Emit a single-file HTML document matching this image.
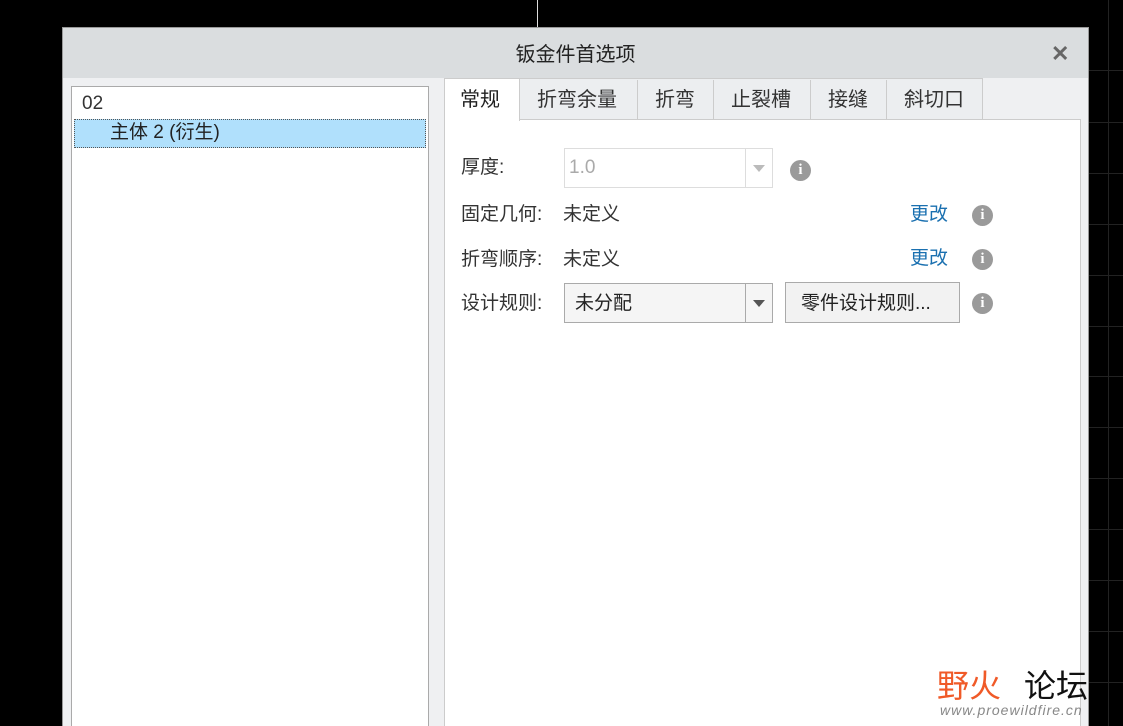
<!DOCTYPE html><html><head><style>
html,body{margin:0;width:1123px;height:726px;overflow:hidden}
body{background:#000;position:relative;font-family:"Liberation Sans","Noto Sans CJK SC",sans-serif;}
.a{position:absolute}
.t{font-size:19px;color:#333;line-height:22px}
.info{position:absolute;width:21px;height:21px;border-radius:50%;background:#9a9a9a;color:#fff;font:bold 15px "Liberation Serif",serif;text-align:center;line-height:21px}
</style></head><body>
<div class="a" style="left:537px;top:0;width:1px;height:28px;background:#ddd"></div>
<div class="a" style="left:1089px;top:70px;width:34px;height:1px;background:#222"></div>
<div class="a" style="left:1089px;top:122px;width:34px;height:1px;background:#222"></div>
<div class="a" style="left:1089px;top:173px;width:34px;height:1px;background:#222"></div>
<div class="a" style="left:1089px;top:224px;width:34px;height:1px;background:#222"></div>
<div class="a" style="left:1089px;top:275px;width:34px;height:1px;background:#222"></div>
<div class="a" style="left:1089px;top:326px;width:34px;height:1px;background:#222"></div>
<div class="a" style="left:1089px;top:376px;width:34px;height:1px;background:#222"></div>
<div class="a" style="left:1089px;top:427px;width:34px;height:1px;background:#222"></div>
<div class="a" style="left:1089px;top:478px;width:34px;height:1px;background:#222"></div>
<div class="a" style="left:1089px;top:529px;width:34px;height:1px;background:#222"></div>
<div class="a" style="left:1089px;top:580px;width:34px;height:1px;background:#222"></div>
<div class="a" style="left:1089px;top:631px;width:34px;height:1px;background:#222"></div>
<div class="a" style="left:1089px;top:682px;width:34px;height:1px;background:#222"></div>
<div class="a" style="left:1108px;top:0;width:1px;height:726px;background:#222"></div>
<div class="a" style="left:62px;top:27px;width:1027px;height:700px;background:#eff0f2;border:1px solid #999;box-sizing:border-box"></div>
<div class="a" style="left:63px;top:28px;width:1025px;height:50px;background:#dadddf"></div>
<div class="a t" style="left:63px;top:44px;width:1025px;text-align:center;font-size:20px;color:#222">钣金件首选项</div>
<div class="a" style="left:1051px;top:41px;font:bold 22px 'Liberation Sans',sans-serif;color:#666">✕</div>
<div class="a" style="left:71px;top:86px;width:358px;height:650px;background:#fff;border:1px solid #aaa;box-sizing:border-box"></div>
<div class="a t" style="left:82px;top:93px">02</div>
<div class="a" style="left:74px;top:119px;width:352px;height:29px;background:#b0e0fc;border:1px dotted #555;box-sizing:border-box"></div>
<div class="a t" style="left:110px;top:122px;color:#222">主体 2 (衍生)</div>
<div class="a" style="left:444px;top:119px;width:637px;height:620px;background:#fff;border:1px solid #ccc;box-sizing:border-box"></div>
<div class="a" style="left:444px;top:78px;width:539px;height:42px;background:#eceef0;border:1px solid #ccc;box-sizing:border-box"></div>
<div class="a" style="left:444px;top:78px;width:76px;height:43px;background:#fff;border:1px solid #ccc;border-bottom:none;box-sizing:border-box"></div>
<div class="a" style="left:637px;top:80px;width:1px;height:39px;background:#ccc"></div>
<div class="a" style="left:713px;top:80px;width:1px;height:39px;background:#ccc"></div>
<div class="a" style="left:810px;top:80px;width:1px;height:39px;background:#ccc"></div>
<div class="a" style="left:886px;top:80px;width:1px;height:39px;background:#ccc"></div>
<div class="a t" style="left:460px;top:89px;color:#222;font-size:20px">常规</div>
<div class="a t" style="left:537px;top:89px;font-size:20px">折弯余量</div>
<div class="a t" style="left:655px;top:89px;font-size:20px">折弯</div>
<div class="a t" style="left:731px;top:89px;font-size:20px">止裂槽</div>
<div class="a t" style="left:828px;top:89px;font-size:20px">接缝</div>
<div class="a t" style="left:904px;top:89px;font-size:20px">斜切口</div>
<div class="a t" style="left:461px;top:157px">厚度:</div>
<div class="a" style="left:564px;top:148px;width:209px;height:40px;border:1px solid #ddd;background:#fff;box-sizing:border-box"></div>
<div class="a" style="left:745px;top:149px;width:1px;height:38px;background:#ddd"></div>
<div class="a t" style="left:569px;top:157px;color:#aaa">1.0</div>
<div class="a" style="left:753px;top:165px;border:6px solid transparent;border-top:7px solid #bbb"></div>
<div class="info" style="left:790px;top:160px">i</div>
<div class="a t" style="left:461px;top:204px">固定几何:</div>
<div class="a t" style="left:563px;top:204px">未定义</div>
<div class="a t" style="left:910px;top:204px;color:#1a70b0">更改</div>
<div class="info" style="left:972px;top:205px">i</div>
<div class="a t" style="left:461px;top:249px">折弯顺序:</div>
<div class="a t" style="left:563px;top:249px">未定义</div>
<div class="a t" style="left:910px;top:248px;color:#1a70b0">更改</div>
<div class="info" style="left:972px;top:249px">i</div>
<div class="a t" style="left:461px;top:293px">设计规则:</div>
<div class="a" style="left:564px;top:283px;width:209px;height:40px;border:1px solid #aaa;background:#f5f5f5;box-sizing:border-box"></div>
<div class="a" style="left:745px;top:284px;width:1px;height:38px;background:#aaa"></div>
<div class="a t" style="left:575px;top:293px;color:#222">未分配</div>
<div class="a" style="left:753px;top:300px;border:6px solid transparent;border-top:7px solid #555"></div>
<div class="a" style="left:785px;top:282px;width:175px;height:41px;border:1px solid #aaa;background:#f2f2f2;box-sizing:border-box"></div>
<div class="a t" style="left:801px;top:293px;color:#222">零件设计规则...</div>
<div class="info" style="left:972px;top:293px">i</div>
<div class="a" style="left:937px;top:661px;font-size:32px;color:#f05a28">野火</div>
<div class="a" style="left:1024px;top:661px;font-size:32px;color:#111">论坛</div>
<div class="a" style="left:940px;top:702px;font:italic 14px 'Liberation Sans',sans-serif;color:#888;letter-spacing:1px">www.proewildfire.cn</div>
</body></html>
